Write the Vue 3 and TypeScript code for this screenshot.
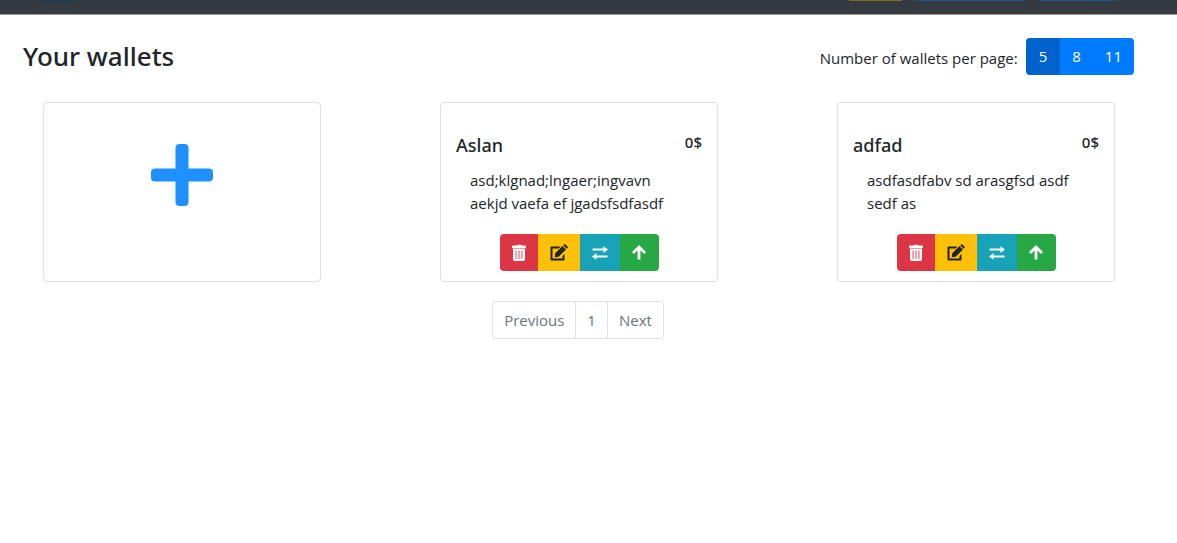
<script setup lang="ts">
import { ref } from 'vue'

interface Wallet {
  id: number
  name: string
  balance: string
  description: string
}

const pageSizes: number[] = [5, 8, 11]
const pageSize = ref<number>(5)
const wallets: Wallet[] = [
  { id: 1, name: 'Aslan', balance: '0$', description: 'asd;klgnad;lngaer;ingvavn aekjd vaefa ef jgadsfsdfasdf' },
  { id: 2, name: 'adfad', balance: '0$', description: 'asdfasdfabv sd arasgfsd asdf sedf as' },
]
</script>

<template>
  <header class="navbar">
    <span class="nav-edge brand"></span>
    <span class="nav-edge warning"></span>
    <span class="nav-edge primary wide"></span>
    <span class="nav-edge primary"></span>
  </header>
  <main class="page">
    <div class="heading">
      <h1>Your wallets</h1>
      <div class="page-size">
        <span id="page-size-label" class="label">Number of wallets per page:</span>
        <div class="sizes" role="group" aria-labelledby="page-size-label">
          <button
            v-for="size in pageSizes"
            :key="size"
            type="button"
            :class="{ active: size === pageSize }"
            :aria-pressed="size === pageSize"
            @click="pageSize = size"
          >{{ size }}</button>
        </div>
      </div>
    </div>

    <section class="wallets">
      <button type="button" class="card add" aria-label="Add wallet">
        <svg viewBox="0 0 62 62" aria-hidden="true">
          <rect x="24.500" y="0" width="13" height="62" rx="4" />
          <rect x="0" y="24.500" width="62" height="13" rx="4" />
        </svg>
      </button>
      <article v-for="wallet in wallets" :key="wallet.id" class="card wallet">
        <div class="title">
          <h2>{{ wallet.name }}</h2>
          <span class="balance">{{ wallet.balance }}</span>
        </div>
        <p>{{ wallet.description }}</p>
        <div class="actions">
          <button type="button" class="delete" aria-label="Delete">
            <svg viewBox="0 0 16 18" aria-hidden="true">
              <path fill-rule="evenodd" d="M5.500 1.500Q5.700.8 6.400.8h3.200q.7 0 .9.7H14q1 0 1 .8v1.900H1V2.300Q1 1.500 2 1.500ZM2 4.700h12v10.500q0 1.800-1.800 1.800H3.800Q2 17 2 15.200ZM4.600 6.600v8.300h.9V6.600Zm2.950 0v8.300h.9V6.600Zm2.950 0v8.300h.9V6.600Z" />
            </svg>
          </button>
          <button type="button" class="edit" aria-label="Edit">
            <svg viewBox="0 0 18 18" aria-hidden="true">
              <path d="M10.500 2.500H1.500Q.5 2.500.5 3.500v12q0 1 1 1h12q1 0 1-1V10l-2 2v2.500h-10v-10h6Z" />
              <path d="m5.200 9.300 7.300-7.300 3.500 3.500-7.300 7.300-3.900.5ZM13.200 1.300l.8-.8q.7-.7 1.400 0l2.100 2.100q.7.7 0 1.400l-.8.800Z" />
            </svg>
          </button>
          <button type="button" class="transfer" aria-label="Transfer">
            <svg viewBox="0 0 18 18" aria-hidden="true">
              <path d="M1.500 4.600h11V2.200L17 5.600 12.500 9V6.600h-11ZM16.500 13.400h-11v2.400L1 12.400 5.500 9v2.400h11Z" />
            </svg>
          </button>
          <button type="button" class="deposit" aria-label="Deposit">
            <svg viewBox="0 0 16 18" aria-hidden="true">
              <path class="stroke" d="M8 15.500V3.500M2 9l6-6 6 6" />
            </svg>
          </button>
        </div>
      </article>
    </section>

    <nav class="pagination" aria-label="Wallet pages">
      <button type="button">Previous</button>
      <button type="button">1</button>
      <button type="button">Next</button>
    </nav>
  </main>
</template>

<style>
body {
  background: #fff;
}
</style>

<style scoped>
.navbar,
.page {
  font-family: "Open Sans", "Noto Sans", sans-serif;
  font-size: 15px;
  line-height: 23px;
  color: #212529;
}
.navbar {
  display: flex;
  gap: 12px;
  height: 15px;
  padding: 0 59px 0 38px;
  background: #343a40;
  border-bottom: 1px solid #999c9f;
  box-sizing: border-box;
}
.nav-edge {
  width: 80px;
  height: 1px;
}
.brand {
  width: 38px;
  margin-right: auto;
  background: #123f66;
}
.warning {
  width: 53px;
  background: #806b2b;
}
.primary {
  background: #1c5795;
}
.wide {
  width: 112px;
}
.page {
  padding: 23px 43px;
}
button {
  font: inherit;
  cursor: pointer;
}
.heading {
  display: flex;
  justify-content: space-between;
  align-items: flex-start;
  margin-left: -20px;
}
h1,
h2,
.balance {
  font-family: "Noto Sans", "Open Sans", sans-serif;
  font-weight: 500;
}
h1 {
  margin: 0;
  font-size: 26px;
  line-height: 36px;
}
.page-size {
  display: flex;
  align-items: center;
  gap: 8px;
}
.label {
  padding-top: 3px;
}
.sizes {
  display: flex;
  border-radius: 4px;
  overflow: hidden;
}
.sizes button {
  height: 37px;
  padding: 0 12px;
  border: 0;
  background: #007bff;
  color: #fff;
}
.sizes button.active {
  padding: 0 13px;
  background: #0062cc;
}
.wallets {
  display: grid;
  grid-template-columns: repeat(3, 1fr);
  gap: 119px;
  margin: 27px 19px 19px 0;
}
.card {
  box-sizing: border-box;
  min-height: 180px;
  border: 1px solid #dfdfdf;
  border-radius: 4px;
  background: #fff;
}
.add {
  display: flex;
  justify-content: center;
  padding: 41px 0 0;
}
.add svg {
  width: 62px;
  height: 62px;
  fill: #1e90ff;
}
.wallet {
  padding: 28px 15px 10px;
}
.title {
  display: flex;
  justify-content: space-between;
}
h2 {
  margin: 0;
  font-size: 18px;
  line-height: 28px;
}
p {
  margin: 10px 14px 19px;
}
.actions {
  display: flex;
  width: fit-content;
  margin: 0 auto;
  border-radius: 4px;
  overflow: hidden;
}
.actions button {
  display: flex;
  align-items: center;
  justify-content: center;
  width: 39px;
  height: 37px;
  padding: 0;
  border: 0;
  color: #fff;
}
.actions svg {
  height: 18px;
  fill: currentColor;
}
.actions .stroke {
  fill: none;
  stroke: currentColor;
  stroke-width: 2.800;
}
.actions .delete {
  width: 38px;
  background: #dc3545;
}
.actions .edit {
  width: 42px;
  background: #ffc107;
  color: #212529;
}
.actions .transfer {
  width: 40px;
  background: #17a2b8;
}
.actions .deposit {
  background: #28a745;
}
.pagination {
  display: flex;
  justify-content: center;
  margin-right: 20px;
}
.pagination button {
  height: 38px;
  margin-left: -1px;
  padding: 0 11px;
  border: 1px solid #dee2e6;
  background: #fff;
  color: #6c757d;
}
.pagination button:first-child {
  border-radius: 4px 0 0 4px;
}
.pagination button:last-child {
  border-radius: 0 4px 4px 0;
}
</style>
